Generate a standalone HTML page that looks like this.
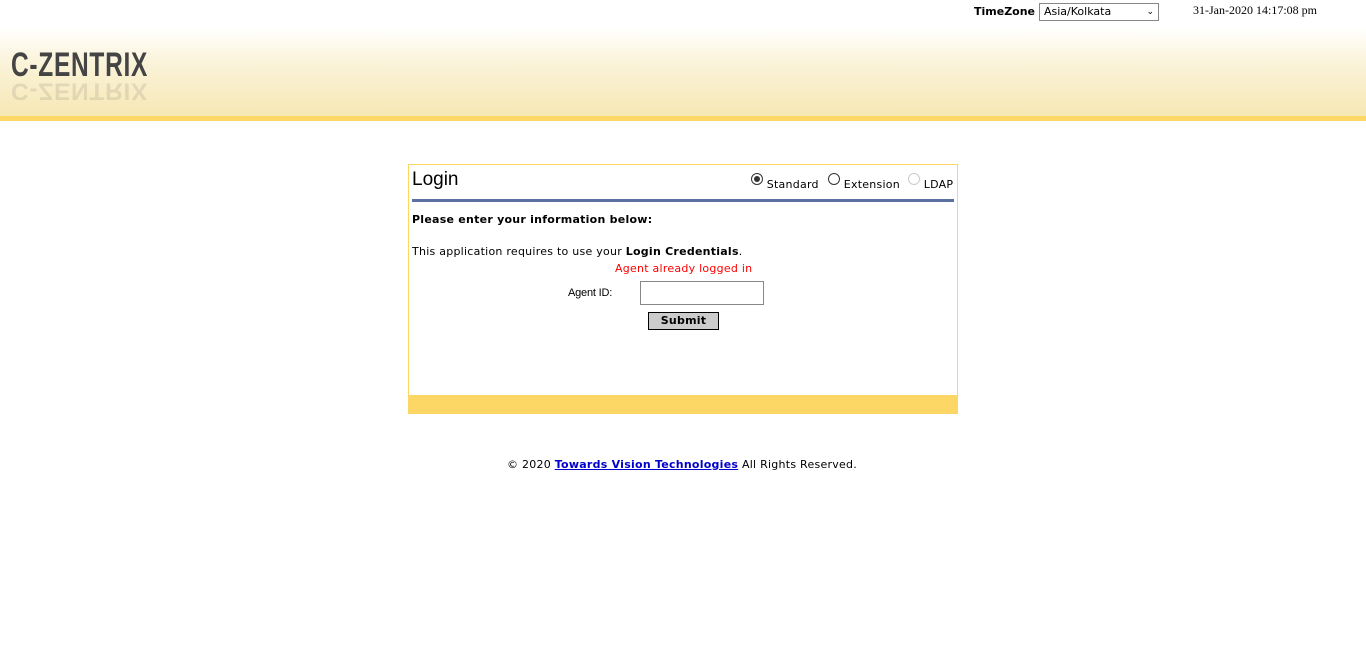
<!DOCTYPE html>
<html><head><style>
body{margin:0;width:1366px;height:654px;background:#fff;position:relative;overflow:hidden;font-family:"DejaVu Sans","Liberation Sans",sans-serif;font-size:11px;color:#000;letter-spacing:0.25px}
.a{position:absolute;white-space:nowrap}
#hdr{position:absolute;left:0;top:0;width:1366px;height:117px;background:linear-gradient(#fff 0,#fff 28px,#fbf4dc 60px,#f6e7b3 117px)}
#line{position:absolute;left:0;top:116px;width:1366px;height:5px;background:#fdd766}
.logo{font-family:"Liberation Sans",sans-serif;font-weight:bold;font-size:34px;line-height:34px;color:#444;transform:scaleX(0.72);transform-origin:left top;letter-spacing:1px}
.radio{display:inline-block;width:12px;height:12px;border:1px solid #333;border-radius:50%;box-sizing:border-box;position:relative;vertical-align:3px}
</style></head><body>
<div id="hdr"></div><div id="line"></div>
<div class="a logo" style="left:11px;top:48px">C-ZENTRIX</div>
<div class="a logo" style="left:11px;top:103px;transform:scaleX(0.72) scaleY(-0.7);opacity:.12">C-ZENTRIX</div>
<div class="a" style="left:974px;top:5px;font-weight:bold;letter-spacing:0">TimeZone</div>
<div class="a" style="left:1039px;top:3px;height:16px;border:1px solid #888;background:#fff;font-size:11px;line-height:16px;padding-left:4px;width:114px;letter-spacing:0">Asia/Kolkata<span style="position:absolute;right:4px;top:0;font-size:9px">&#8964;</span></div>
<div class="a" style="left:1193px;top:3px;font-family:'Liberation Serif',serif;font-size:12px;letter-spacing:0">31-Jan-2020 14:17:08 pm</div>

<div class="a" style="left:408px;top:164px;width:548px;height:248px;border:1px solid #fdd766"></div>
<div class="a" style="left:408px;top:395px;width:550px;height:19px;background:#fdd766"></div>
<div class="a" style="left:412px;top:169px;font-family:'Liberation Sans',sans-serif;font-size:19px;letter-spacing:0">Login</div>
<div class="a" style="left:751px;top:173px"><span class="radio"><span style="position:absolute;left:2px;top:2px;width:6px;height:6px;border-radius:50%;background:#333"></span></span> Standard</div>
<div class="a" style="left:828px;top:173px"><span class="radio"></span> Extension</div>
<div class="a" style="left:908px;top:173px"><span class="radio" style="border-color:#ccc"></span> LDAP</div>
<div class="a" style="left:412px;top:199px;width:542px;height:3px;background:#5b6fa0"></div>
<div class="a" style="left:412px;top:213px;font-weight:bold">Please enter your information below:</div>
<div class="a" style="left:412px;top:245px">This application requires to use your <b>Login Credentials</b>.</div>
<div class="a" style="left:615px;top:262px;color:#f00">Agent already logged in</div>
<div class="a" style="left:568px;top:287px;font-family:'Liberation Sans',sans-serif;font-size:11px;letter-spacing:-0.2px">Agent ID:</div>
<div class="a" style="left:640px;top:281px;width:122px;height:22px;border:1px solid #888"></div>
<div class="a" style="left:648px;top:312px;width:69px;height:16px;border:1px solid #000;background:#ccc;text-align:center;font-weight:bold;line-height:16px">Submit</div>
<div class="a" style="left:507px;top:458px">© 2020 <a style="color:#00c;font-weight:bold;text-decoration:underline">Towards Vision Technologies</a> All Rights Reserved.</div>
</body></html>
